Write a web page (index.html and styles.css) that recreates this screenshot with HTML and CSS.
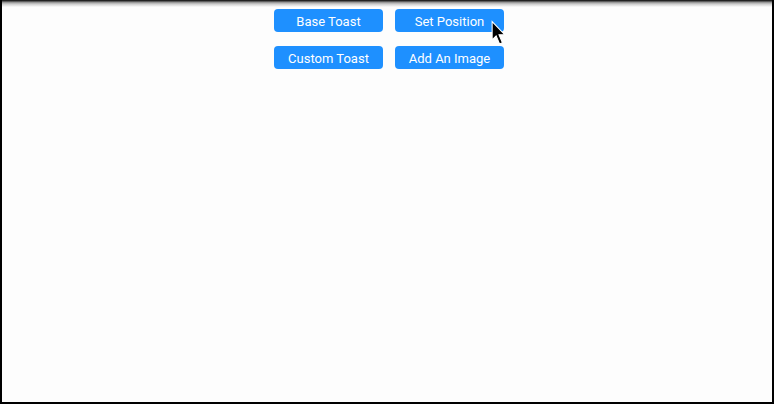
FILE: index.html
```html
<!DOCTYPE html>
<html>
<head>
<meta charset="utf-8">
<link rel="stylesheet" href="styles.css">
</head>
<body>
<div class="frame">
  <div class="shade"></div>
  <div class="grid">
    <button class="btn">Base Toast</button>
    <button class="btn btn-hover">Set Position
      <svg class="cursor" width="16" height="26" viewBox="0 0 14 22"><path d="M1 1 L1 17 L4.5 13.5 L7.5 20.5 L10 19.5 L7 12.5 L12 12.5 Z" fill="#000" stroke="#fff" stroke-width="0.9"/></svg>
    </button>
    <button class="btn">Custom Toast</button>
    <button class="btn">Add An Image</button>
  </div>
</div>
</body>
</html>
```
FILE: styles.css
```css
html, body {
  margin: 0;
  padding: 0;
  width: 774px;
  height: 404px;
  overflow: hidden;
  background: #fff;
}
.frame {
  box-sizing: border-box;
  width: 774px;
  height: 404px;
  border-left: 2px solid #000;
  border-right: 2px solid #000;
  border-bottom: 2px solid #000;
  background: #fdfdfd;
  position: relative;
}
.shade {
  height: 7px;
  margin-bottom: -7px;
  background: linear-gradient(#111 0, #333 1px, #888 2px, #ccc 4px, #fdfdfd 7px);
}
.grid {
  display: grid;
  grid-template-columns: 109px 109px;
  column-gap: 12px;
  row-gap: 14px;
  justify-content: center;
  padding-top: 9px;
  padding-left: 4px;
}
.btn {
  height: 23px;
  background: #1e90ff;
  color: #fff;
  border: none;
  border-radius: 4px;
  font-family: Roboto, "Liberation Sans", sans-serif;
  font-size: 13px;
  padding: 1px 0 0;
  position: relative;
  cursor: default;
}
.cursor {
  position: absolute;
  left: 96px;
  top: 11px;
}
```
